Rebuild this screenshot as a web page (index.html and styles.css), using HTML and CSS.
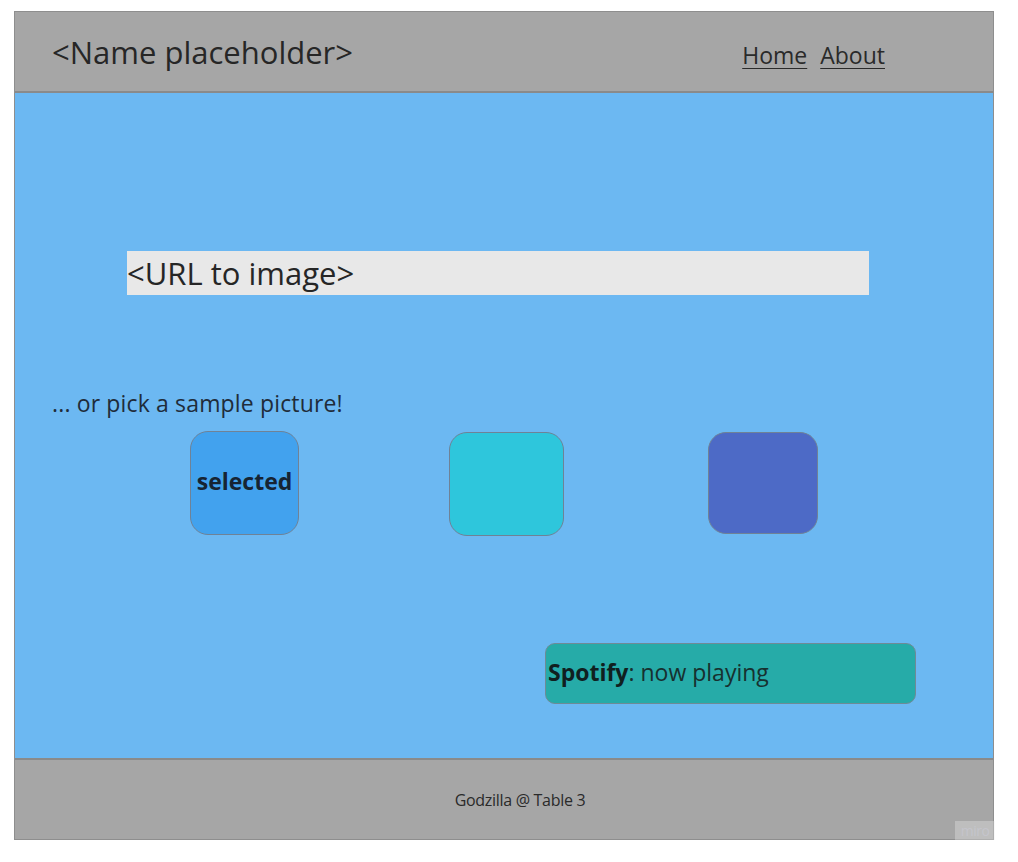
FILE: index.html
```html
<!DOCTYPE html>
<html lang="en">
<head>
<meta charset="utf-8">
<title>Name placeholder</title>
<link rel="stylesheet" href="styles.css">
</head>
<body>
<div class="frame">
  <header class="header">
    <div class="brand">&lt;Name placeholder&gt;</div>
    <nav class="nav">
      <a href="#">Home</a>
      <a href="#">About</a>
    </nav>
  </header>
  <main class="main">
    <div class="url-box">&lt;URL to image&gt;</div>
    <p class="pick">... or pick a sample picture!</p>
    <div class="tiles">
      <div class="tile tile-a">selected</div>
      <div class="tile tile-b"></div>
      <div class="tile tile-c"></div>
    </div>
    <div class="spotify-row">
      <div class="spotify"><b>Spotify</b>: now playing</div>
    </div>
  </main>
  <footer class="footer">Godzilla @ Table 3</footer>
  <div class="miro">miro</div>
</div>
</body>
</html>
```

FILE: styles.css
```css
* { box-sizing: border-box; }

html, body {
  margin: 0;
  padding: 0;
  background: #ffffff;
}

body {
  padding: 11px 0 0 14px;
  font-family: "Open Sans", "Noto Sans", sans-serif;
  color: #2a2a2a;
}

.frame {
  position: relative;
  width: 980px;
  border: 1px solid #8e8e8e;
  display: flex;
  flex-direction: column;
}

.header {
  height: 81px;
  background: #a6a6a6;
  border-bottom: 2px solid #8a8a8a;
  display: flex;
  align-items: flex-start;
  padding: 0 0 0 37px;
}

.brand {
  font-size: 31px;
  line-height: 42px;
  margin-top: 19px;
  color: #262626;
}

.nav {
  margin-left: auto;
  margin-right: 108px;
  margin-top: 27px;
  display: flex;
  gap: 13px;
}

.nav a {
  font-size: 23px;
  line-height: 32px;
  color: #2a2a2a;
  text-decoration: underline;
  text-underline-offset: 4px;
  text-decoration-thickness: 1px;
}

.main {
  height: 665px;
  background: #6cb8f2;
  display: flex;
  flex-direction: column;
  padding-top: 158px;
}

.url-box {
  margin-left: 112px;
  width: 742px;
  height: 44px;
  background: #e8e8e8;
  font-size: 31px;
  line-height: 44px;
  color: #262626;
  white-space: nowrap;
}

.pick {
  margin: 92px 0 0 37px;
  font-size: 23px;
  line-height: 32px;
  letter-spacing: 0.15px;
  color: #1f2c3a;
}

.tiles {
  display: flex;
  margin-top: 12px;
  padding-left: 175px;
  gap: 150px;
  align-items: flex-start;
}

.tile {
  height: 104px;
  border: 1px solid #6f8296;
  border-radius: 18px;
  display: flex;
  align-items: center;
  justify-content: center;
  font-weight: 700;
  font-size: 23px;
  padding-bottom: 4px;
  color: #162433;
}

.tile-a { width: 109px; background: #42a2ee; }
.tile-b { width: 115px; background: #2ec6dc; margin-top: 1px; }
.tile-c { width: 110px; background: #4d6ac6; margin-top: 1px; margin-left: -6px; height: 102px; }

.spotify-row {
  display: flex;
  margin-top: 107px;
  padding-left: 530px;
}

.spotify {
  width: 371px;
  height: 61px;
  background: #26aba8;
  border: 1px solid #6f8a96;
  border-radius: 10px;
  font-size: 23px;
  line-height: 56px;
  padding-left: 2px;
  color: #17302f;
}

.spotify b { font-weight: 700; color: #10201f; }

.footer {
  height: 81px;
  background: #a6a6a6;
  border-top: 2px solid #8a8a8a;
  display: flex;
  align-items: center;
  justify-content: center;
  font-size: 16px;
  letter-spacing: -0.3px;
  color: #2a2a2a;
  padding-top: 0;
  padding-left: 32px;
}

.miro {
  position: absolute;
  right: -2px;
  bottom: -1px;
  width: 40px;
  height: 19px;
  background: rgba(235, 235, 235, 0.35);
  color: rgba(200, 200, 210, 0.7);
  font-size: 14px;
  line-height: 20px;
  text-align: center;
  letter-spacing: -0.5px;
}
```
